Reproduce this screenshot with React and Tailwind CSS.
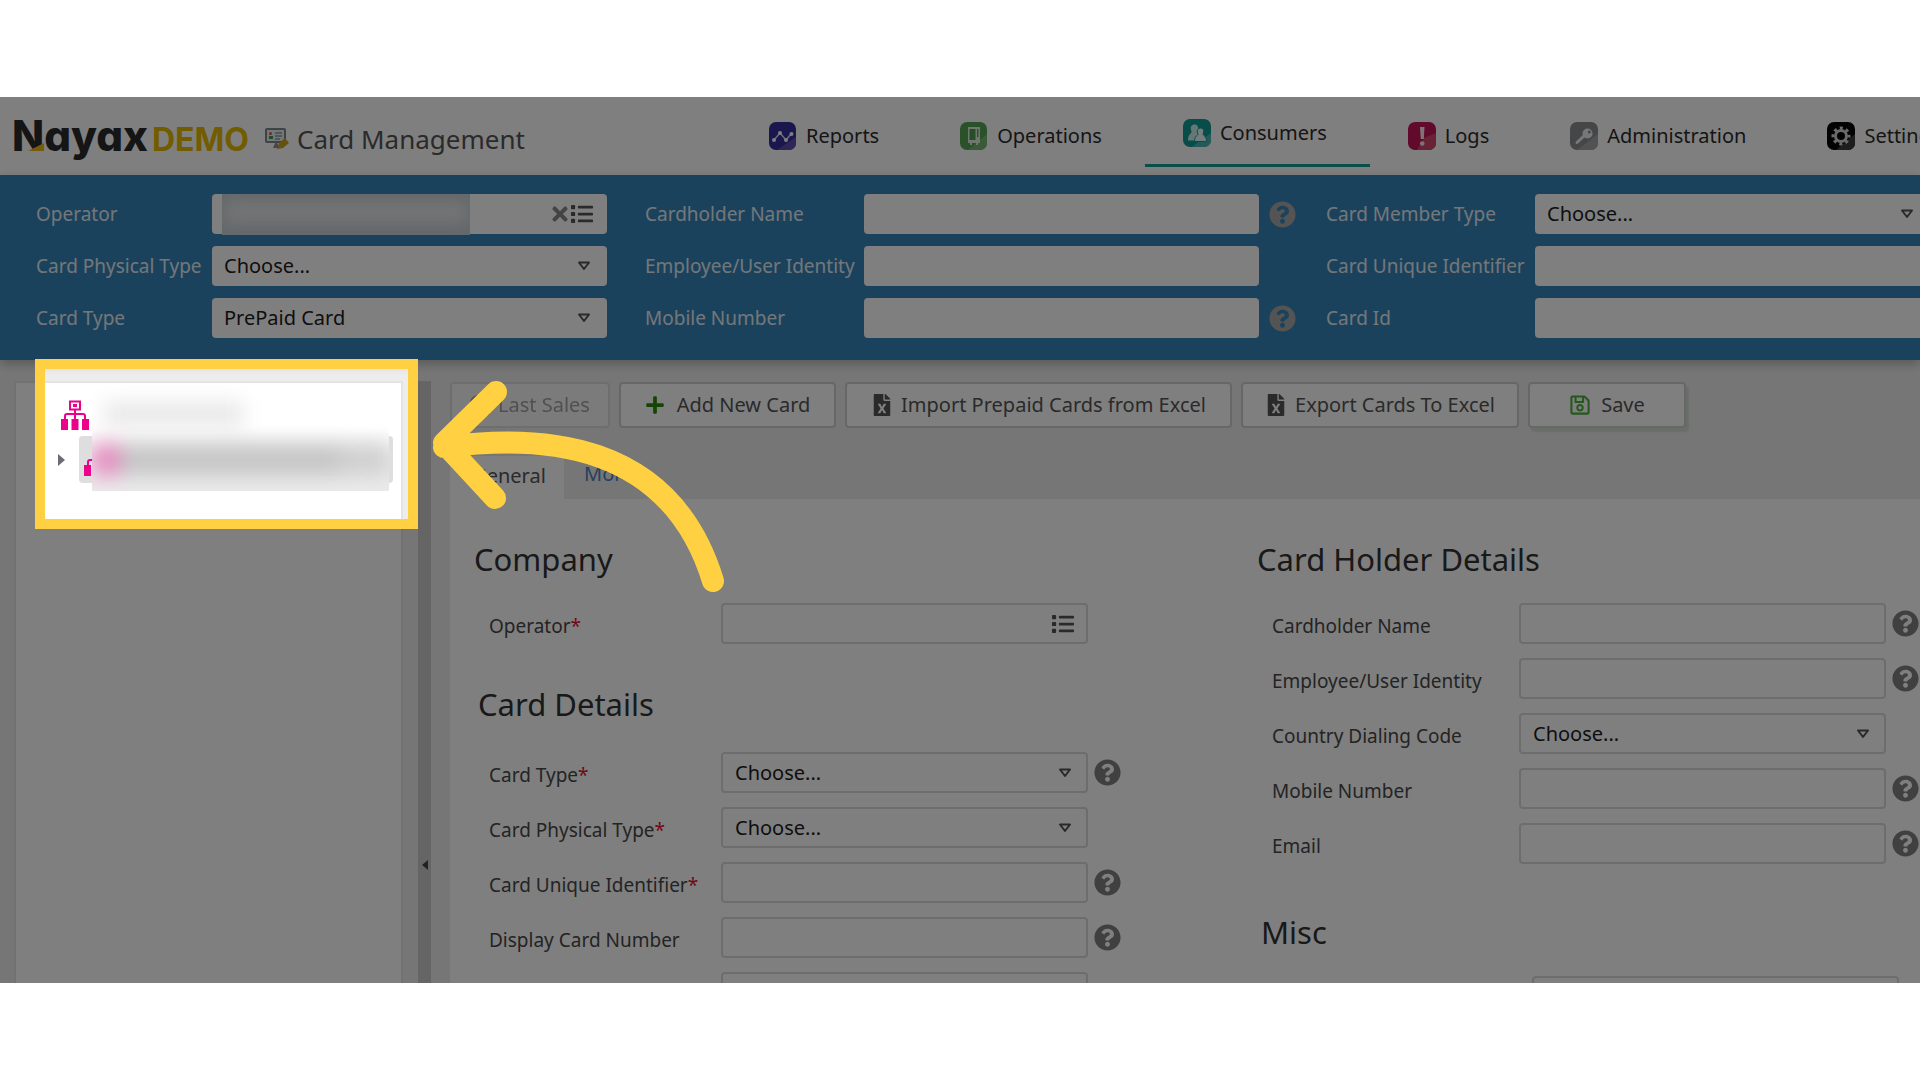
import React from "react";
import {
  FaFileExcel,
  FaList,
  FaPlus,
  FaQuestionCircle,
  FaRegSave,
  FaSearch,
  FaTimes,
} from "react-icons/fa";

const ReportsIcon = () => (
  <svg viewBox="0 0 28 28" className="size-7 shrink-0" aria-hidden="true">
    <rect width="27" height="28" rx="7" fill="#322f9c" />
    <path d="M27 15v6a7 7 0 0 1-7 7H8z" fill="#5a4fae" />
    <path d="M5 18l6-7 6 7 5-6" fill="none" stroke="#d8d4f0" strokeWidth="1.500" strokeLinejoin="round" />
    <circle cx="5" cy="18" r="2" fill="#fff" />
    <circle cx="11" cy="11" r="2" fill="#fff" />
    <circle cx="17" cy="18" r="2" fill="#fff" />
    <circle cx="22.500" cy="12" r="2" fill="#fff" />
  </svg>
);

const OperationsIcon = () => (
  <svg viewBox="0 0 28 28" className="size-7 shrink-0" aria-hidden="true">
    <rect width="27" height="28" rx="7" fill="#57a254" />
    <path d="M27 12v9a7 7 0 0 1-7 7H8z" fill="#74b671" />
    <path d="M8 5h12v16h-2v2h-2v-2h-4v2h-2v-2H8z" fill="#dff1dd" />
    <rect x="9.500" y="7" width="6" height="11" fill="#4f9a4c" />
    <rect x="17" y="7" width="1.500" height="8" fill="#57a254" />
  </svg>
);

const ConsumersIcon = () => (
  <svg viewBox="0 0 28 28" className="size-7 shrink-0" aria-hidden="true">
    <rect width="28" height="28" rx="7" fill="#139a97" />
    <path d="M28 14v7a7 7 0 0 1-7 7H9z" fill="#48b5b2" />
    <path d="M11.500 5.500c3 0 4 2.500 3.500 4.500-.3 1.500-1 2-.5 3 .8 1.500 3 2 3 8.500H5c0-6 3-6.500 3.500-8.500.2-1-.5-1.500-.7-3-.3-2 .7-4.500 3.700-4.500z" fill="#cdeeec" />
    <path d="M17.500 9c2.500 0 3.500 2 3.200 4-.2 1.200-.8 1.500-.5 2.500.6 1.500 3.300 1.500 3.300 7H11.500c0-5.500 2.700-5.500 3.300-7 .3-1-.3-1.300-.5-2.500-.3-2 .7-4 3.200-4z" fill="#e8fbfa" stroke="#139a97" strokeWidth="1" />
  </svg>
);

const LogsIcon = () => (
  <svg viewBox="0 0 28 28" className="size-7 shrink-0" aria-hidden="true">
    <rect width="28" height="28" rx="7" fill="#c31458" />
    <path d="M28 11v10a7 7 0 0 1-7 7H9l7-12z" fill="#d0486f" />
    <path d="M12 5h4.500l-.7 12h-3z" fill="#fde9f0" />
    <circle cx="14.200" cy="21.500" r="2.300" fill="#fde9f0" />
  </svg>
);

const AdministrationIcon = () => (
  <svg viewBox="0 0 28 28" className="size-7 shrink-0" aria-hidden="true">
    <rect width="28" height="28" rx="7" fill="#8b8d91" />
    <path d="M28 12v9a7 7 0 0 1-7 7H7z" fill="#a2a4a8" />
    <circle cx="17.500" cy="11.500" r="5" fill="#f0f0f2" />
    <circle cx="19.300" cy="10" r="1.500" fill="#8b8d91" />
    <path d="M14 14l-7 6.500" stroke="#f0f0f2" strokeWidth="3" strokeLinecap="round" />
  </svg>
);

const SettingsIcon = () => (
  <svg viewBox="0 0 28 28" className="size-7 shrink-0" aria-hidden="true">
    <rect width="28" height="28" rx="7" fill="#050505" />
    <path d="M28 12v9a7 7 0 0 1-7 7H9z" fill="#3c3c3c" />
    <circle cx="14" cy="14" r="5.500" fill="none" stroke="#d4d4d4" strokeWidth="3" />
    <circle cx="14" cy="14" r="8" fill="none" stroke="#d4d4d4" strokeWidth="3" strokeDasharray="3.100 3.183" strokeDashoffset="1.500" />
  </svg>
);

const CardEditIcon = () => (
  <svg viewBox="0 0 24 22" className="w-6 shrink-0" aria-hidden="true">
    <rect x="1" y="1" width="19" height="13" rx="1" fill="#e9eef0" stroke="#7d868a" strokeWidth="2" />
    <circle cx="5.500" cy="5.500" r="1.500" fill="#d9534f" />
    <rect x="4" y="8" width="4" height="3" fill="#3f9a52" />
    <path d="M10 5h7M10 8h7M10 11h5" stroke="#8d979b" strokeWidth="1.500" />
    <path d="M8 20l3-7 4 7z" fill="#8a8f92" />
    <path d="M12 21l2-6 6-5 4 5-6 5z" fill="#c7a52c" />
  </svg>
);

const TreeIcon = () => (
  <svg viewBox="0 0 28 30" className="h-[30px] w-7 shrink-0" aria-hidden="true">
    <rect x="9" y="1.500" width="10" height="8" fill="none" stroke="#ec008c" strokeWidth="2" />
    <rect x="12" y="4" width="4" height="3" fill="#ec008c" />
    <path d="M14 10v9M4 20v-4q0-2 2-2h16q2 0 2 2v4" fill="none" stroke="#ec008c" strokeWidth="2" />
    <path d="M0 19h7v11H0zM10.500 19h7v11h-7zM21 19h7v11h-7z" fill="#ec008c" />
  </svg>
);

const navItems = [
  { name: "Reports", icon: <ReportsIcon /> },
  { name: "Operations", icon: <OperationsIcon /> },
  { name: "Consumers", icon: <ConsumersIcon />, active: true },
  { name: "Logs", icon: <LogsIcon /> },
  { name: "Administration", icon: <AdministrationIcon /> },
  { name: "Settings", icon: <SettingsIcon /> },
];

const filterColumns = [
  {
    labelWidth: "w-[176px]",
    fields: [
      { id: "f-operator", label: "Operator", type: "picker" },
      { id: "f-physical", label: "Card Physical Type", type: "select", value: "Choose..." },
      { id: "f-type", label: "Card Type", type: "select", value: "PrePaid Card" },
    ],
  },
  {
    labelWidth: "w-[219px]",
    fields: [
      { id: "f-holder", label: "Cardholder Name", type: "text", help: true },
      { id: "f-employee", label: "Employee/User Identity", type: "text" },
      { id: "f-mobile", label: "Mobile Number", type: "text", help: true },
    ],
  },
  {
    labelWidth: "w-[209px]",
    fields: [
      { id: "f-member", label: "Card Member Type", type: "select", value: "Choose..." },
      { id: "f-unique", label: "Card Unique Identifier", type: "text" },
      { id: "f-id", label: "Card Id", type: "text" },
    ],
  },
];

const cardFields = [
  { id: "c-type", label: "Card Type", required: true, type: "select", help: true },
  { id: "c-physical", label: "Card Physical Type", required: true, type: "select" },
  { id: "c-unique", label: "Card Unique Identifier", required: true, type: "text", help: true },
  { id: "c-display", label: "Display Card Number", type: "text", help: true },
  { id: "c-extra", label: "", type: "text" },
];

const holderFields = [
  { id: "h-name", label: "Cardholder Name", type: "text", help: true },
  { id: "h-employee", label: "Employee/User Identity", type: "text", help: true },
  { id: "h-country", label: "Country Dialing Code", type: "select" },
  { id: "h-mobile", label: "Mobile Number", type: "text", help: true },
  { id: "h-email", label: "Email", type: "text", help: true },
];

const HelpButton = ({ className }) => (
  <button type="button" aria-label="Help" className={className}>
    <FaQuestionCircle className="size-[27px]" />
  </button>
);

const SelectBox = ({ id, value = "Choose...", className }) => (
  <div className="relative">
    <select id={id} className={`w-full appearance-none rounded-sm bg-white pl-3 text-xl text-[#1c1c1c] ${className}`}>
      <option>{value}</option>
    </select>
    <svg viewBox="0 0 14 10" className="pointer-events-none absolute right-4 top-1/2 w-3.5 -translate-y-1/2" aria-hidden="true">
      <path d="M2 1.500h10L7 8z" fill="none" stroke="#555" strokeWidth="2" strokeLinejoin="round" />
    </svg>
  </div>
);

const FilterField = ({ field, labelWidth }) => (
  <div className="flex h-10 items-center">
    <label htmlFor={field.id} className={`${labelWidth} shrink-0 whitespace-nowrap text-[19px] text-[#e6eef4]`}>
      {field.label}
    </label>
    <div className="w-[395px] shrink-0">
      {field.type === "select" && <SelectBox id={field.id} value={field.value} className="h-10" />}
      {field.type === "text" && <input id={field.id} type="text" className="block h-10 w-full rounded-sm bg-white px-3 text-xl" />}
      {field.type === "picker" && (
        <div className="relative flex h-10 items-center rounded-sm bg-white pr-3.5">
          <input id={field.id} type="text" className="h-10 min-w-0 flex-1 px-3 text-xl" />
          <button type="button" aria-label="Clear" className="text-[#888]">
            <FaTimes className="size-[22px]" />
          </button>
          <button type="button" aria-label="Choose operator" className="text-[#555]">
            <FaList className="size-[22px]" />
          </button>
          {/* redacted operator name */}
          <div className="absolute left-2.5 top-0 h-[41px] w-[248px] overflow-hidden bg-[#c6d0d7]">
            <div className="mx-auto mt-1.5 h-6 w-[244px] bg-[#e8e8e8] blur-[8px]" />
          </div>
        </div>
      )}
    </div>
    {field.help && <HelpButton className="ml-2.5 text-[#a8a8a8]" />}
  </div>
);

const FormField = ({ field, labelWidth = "w-[232px]" }) => (
  <div className="flex h-[41px] items-center">
    <label htmlFor={field.id} className={`${labelWidth} shrink-0 whitespace-nowrap pt-1.5 text-[19px] text-[#484848]`}>
      {field.label}
      {field.required && <span className="text-[#e0102e]">*</span>}
    </label>
    <div className="w-[367px] shrink-0">
      {field.type === "select" && <SelectBox id={field.id} className="h-[41px] border-2 border-[#dadada]" />}
      {field.type === "text" && (
        <input id={field.id} type="text" className="block h-[41px] w-full rounded-sm border-2 border-[#dadada] bg-white px-3 text-xl" />
      )}
      {field.type === "picker" && (
        <div className="flex h-[41px] items-center rounded-sm border-2 border-[#dadada] bg-white pr-3">
          <input id={field.id} type="text" className="min-w-0 flex-1 px-3 text-xl" />
          <button type="button" aria-label="Choose operator" className="text-[#555]">
            <FaList className="size-[22px]" />
          </button>
        </div>
      )}
    </div>
    {field.help && <HelpButton className="ml-1.5 text-[#808080]" />}
  </div>
);

const ToolbarButton = ({ icon, children, className }) => (
  <button
    type="button"
    className={`flex h-[46px] shrink-0 items-center justify-center whitespace-nowrap rounded-sm border-2 border-[#cfcfcf] bg-white text-xl text-[#555] ${className}`}
  >
    {icon}
    {children}
  </button>
);

const Header = () => (
  <header className="flex h-[78px] shrink-0 bg-white">
    <div className="flex w-[731px] shrink-0 items-center pl-3">
      <div className="relative flex w-[239px] items-baseline font-['Inter'] leading-none [font-feature-settings:'cv11']">
        <span className="text-[42px] font-extrabold text-[#2a2a2a]">Nayax</span>
        <span className="ml-1 text-[32px] font-bold text-[#e5b800]">DEMO</span>
        <svg viewBox="0 0 16 8" className="absolute bottom-1.5 left-4 w-4" aria-hidden="true">
          <path d="M0 8L16 0v8z" fill="#e9b61c" />
        </svg>
      </div>
      <h1 className="ml-3.5 flex items-center gap-2 whitespace-nowrap pt-1.5 text-[26px] text-[#555]">
        <CardEditIcon />
        Card Management
      </h1>
    </div>
    <nav className="flex h-[70px] shrink-0">
      {navItems.map((item) => (
        <a
          key={item.name}
          href="#"
          className={`flex shrink-0 items-center gap-[9px] whitespace-nowrap pl-[38px] pr-[43px] text-xl text-[#2b2b2b] ${
            item.active ? "border-b-[3px] border-[#13a09b] pt-1" : "pt-2"
          }`}
        >
          {item.icon}
          {item.name}
        </a>
      ))}
    </nav>
  </header>
);

const Filters = () => (
  <div className="relative flex h-[185px] shrink-0 bg-[#3684b8] pl-9 pt-[19px] shadow-[0_4px_10px_rgba(0,0,0,0.25)]">
    {filterColumns.map((column, index) => (
      <div key={index} className={`flex shrink-0 flex-col gap-3 ${index === 1 ? "mx-[38px] w-[643px]" : ""}`}>
        {column.fields.map((field) => (
          <FilterField key={field.id} field={field} labelWidth={column.labelWidth} />
        ))}
      </div>
    ))}
  </div>
);

const Sidebar = () => (
  <aside className="w-[389px] shrink-0 border-2 border-b-0 border-[#e4e4e4] bg-white">
    <div className="relative h-[110px]">
      <div className="pl-[45px] pt-[17px]">
        <TreeIcon />
      </div>
      <div className="mt-1.5 flex items-center pl-[42px]">
        <svg viewBox="0 0 7 12" className="h-3 w-[7px]" aria-hidden="true">
          <path d="M0 0l7 6-7 6z" fill="#6b6b78" />
        </svg>
        <div className="ml-3.5 flex h-[47px] w-[314px] items-end overflow-hidden rounded bg-[#dedede] pb-[7px] pl-[5px]">
          <TreeIcon />
        </div>
      </div>
      {/* redacted company names */}
      <div className="absolute left-[76px] top-[3px] h-[105px] w-[297px] overflow-hidden bg-linear-to-b from-white from-40% to-[#ebebeb] to-70%">
        <div className="ml-3 mt-4 h-6 w-[140px] bg-[#e8e8e8] blur-[10px]" />
        <div className="mt-[18px] flex h-8 blur-[10px]">
          <div className="w-7 bg-[#e58cc0]" />
          <div className="w-[220px] bg-[#c6c6c6]" />
          <div className="flex-1 bg-[#d0d0d0]" />
        </div>
      </div>
    </div>
  </aside>
);

const CardForm = () => (
  <form className="flex flex-1 bg-white pl-6 pt-10">
    <div className="w-[783px] shrink-0">
      <h2 className="mb-6 text-[31px] leading-10 text-[#333]">Company</h2>
      <div className="pl-[15px]">
        <FormField field={{ id: "c-operator", label: "Operator", required: true, type: "picker" }} />
      </div>
      <h2 className="mb-7 mt-10 pl-1 text-[31px] leading-10 text-[#333]">Card Details</h2>
      <div className="flex flex-col gap-3.5 pl-[15px]">
        {cardFields.map((field) => (
          <FormField key={field.id} field={field} />
        ))}
      </div>
    </div>
    <div className="shrink-0">
      <h2 className="mb-6 text-[31px] leading-10 text-[#333]">Card Holder Details</h2>
      <div className="flex flex-col gap-3.5 pl-[15px]">
        {holderFields.map((field) => (
          <FormField key={field.id} field={field} labelWidth="w-[247px]" />
        ))}
      </div>
      <h2 className="mb-6 mt-12 pl-1 text-[31px] leading-10 text-[#333]">Misc</h2>
      <div className="pl-7">
        <FormField field={{ id: "m-first", label: "", type: "text" }} labelWidth="w-[247px]" />
      </div>
    </div>
  </form>
);

const App = () => {
  return (
    <div className="flex h-screen flex-col overflow-hidden bg-white py-[97px] font-['Noto_Sans',sans-serif]">
      <div className="relative flex min-h-0 flex-1 flex-col overflow-hidden bg-[#ededed]">
        <Header />
        <Filters />
        <div className="flex min-h-0 flex-1 pl-3.5 pt-[21px]">
          <Sidebar />
          <div className="ml-[15px] flex w-[13px] shrink-0 items-center justify-center bg-[#cacaca] pt-[366px]">
            <svg viewBox="0 0 6 10" className="w-1.5" aria-hidden="true">
              <path d="M6 0v10L0 5z" fill="#444" />
            </svg>
          </div>
          <main className="ml-[19px] flex min-w-0 flex-1 flex-col pt-px">
            <div className="flex gap-[9px]">
              <ToolbarButton className="w-[160px] gap-2 opacity-50" icon={<FaSearch className="size-5" />}>
                Last Sales
              </ToolbarButton>
              <ToolbarButton className="w-[217px] gap-3" icon={<FaPlus className="size-5 text-[#2a8a06]" />}>
                Add New Card
              </ToolbarButton>
              <ToolbarButton className="w-[387px] gap-2" icon={<FaFileExcel className="size-[22px]" />}>
                Import Prepaid Cards from Excel
              </ToolbarButton>
              <ToolbarButton className="w-[278px] gap-2" icon={<FaFileExcel className="size-[22px]" />}>
                Export Cards To Excel
              </ToolbarButton>
              <ToolbarButton
                className="w-[158px] gap-2.5 shadow-[3px_4px_2px_#d3dcd3]"
                icon={<FaRegSave className="size-[22px] text-[#4caf3c]" />}
              >
                Save
              </ToolbarButton>
            </div>
            <div className="mt-7 flex h-[43px] shrink-0 text-xl">
              <button type="button" className="w-[114px] bg-white pb-1 pl-1 text-[#555]">
                General
              </button>
              <button type="button" className="px-5 pb-2 text-[#4f7fc0]">
                More
              </button>
            </div>
            <CardForm />
          </main>
        </div>

        {/* spotlight around the tree, dims everything else */}
        <div className="pointer-events-none absolute left-[35px] top-[262px] h-[170px] w-[383px] border-10 border-[#ffd142] shadow-[0_0_0_4000px_rgba(0,0,0,0.5)]" />
        <svg viewBox="0 0 300 230" className="pointer-events-none absolute left-[430px] top-[273px] w-[300px]" aria-hidden="true">
          <path
            d="M66 22L14 73l51 55M14 77C110 64 240 70 283 211"
            fill="none"
            stroke="#ffd142"
            strokeWidth="22"
            strokeLinecap="round"
            strokeLinejoin="round"
          />
        </svg>
      </div>
    </div>
  );
};

export default App;
